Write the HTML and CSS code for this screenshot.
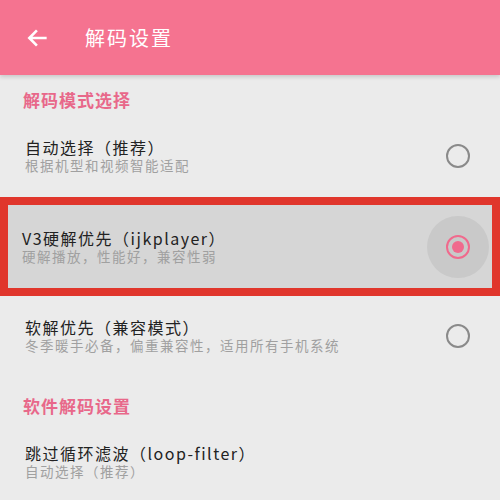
FILE: index.html
```html
<!DOCTYPE html>
<html lang="zh">
<head>
    <meta charset="UTF-8">
    <title>解码设置</title>
    <link rel="stylesheet" href="styles.css">
</head>
<body>
    <div class="toolbar">
        <svg class="back" width="26" height="26" viewBox="0 0 24 24">
            <path d="M20 12H5M11 5l-7 7 7 7" fill="none" stroke="#fff" stroke-width="2.4"/>
        </svg>
        <span class="title">解码设置</span>
    </div>

    <div class="section">解码模式选择</div>

    <div class="item">
        <div class="text">
            <div class="name">自动选择（推荐）</div>
            <div class="desc">根据机型和视频智能适配</div>
        </div>
        <div class="radio-wrap"><span class="radio"></span></div>
    </div>

    <div class="item highlighted">
        <div class="text">
            <div class="name">V3硬解优先（ijkplayer）</div>
            <div class="desc">硬解播放，性能好，兼容性弱</div>
        </div>
        <div class="radio-wrap ripple"><span class="radio checked"></span></div>
    </div>

    <div class="item short">
        <div class="text">
            <div class="name">软解优先（兼容模式）</div>
            <div class="desc">冬季暖手必备，偏重兼容性，适用所有手机系统</div>
        </div>
        <div class="radio-wrap"><span class="radio"></span></div>
    </div>

    <div class="section second">软件解码设置</div>

    <div class="item">
        <div class="text">
            <div class="name">跳过循环滤波（loop-filter）</div>
            <div class="desc">自动选择（推荐）</div>
        </div>
    </div>
</body>
</html>
```

FILE: styles.css
```css
body {
    margin: 0;
    background-color: #ebebeb;
    font-family: "Noto Sans CJK SC", "Liberation Sans", sans-serif;
    overflow: hidden;
}

.toolbar {
    height: 75px;
    background-color: #f57390;
    display: flex;
    align-items: center;
    box-shadow: 0 2px 4px rgba(0, 0, 0, 0.15);
}

.back {
    margin-left: 25px;
}

.title {
    margin-left: 34px;
    color: #fff;
    font-size: 20px;
    letter-spacing: 2px;
}

.section {
    box-sizing: border-box;
    height: 40px;
    padding: 14px 0 0 23px;
    color: #e8688a;
    font-size: 17px;
    line-height: 22px;
    font-weight: bold;
    letter-spacing: 1px;
}

.section.second {
    height: 45px;
    padding-top: 19px;
}

.item {
    height: 82px;
    display: flex;
    align-items: center;
    padding-left: 25px;
    box-sizing: border-box;
}

.item.short {
    height: 80px;
}

.item.highlighted {
    height: 99px;
    border: 8px solid #e0362c;
    background-color: #d6d6d6;
    padding-left: 14px;
}

.text {
    flex: 1;
}

.name {
    font-size: 16px;
    color: #222;
    line-height: 19px;
    letter-spacing: 1.5px;
}

.desc {
    font-size: 13.5px;
    color: #a0a0a0;
    line-height: 17px;
    letter-spacing: 1.5px;
}

.radio-wrap {
    width: 62px;
    height: 62px;
    margin-right: 11px;
    display: flex;
    align-items: center;
    justify-content: center;
    border-radius: 50%;
}

.highlighted .radio-wrap {
    margin-right: 3px;
}

.ripple {
    background-color: #c9c9c9;
}

.radio {
    width: 20px;
    height: 20px;
    border: 2px solid #8a8a8a;
    border-radius: 50%;
    display: flex;
    align-items: center;
    justify-content: center;
}

.radio.checked {
    border-color: #f06a8d;
}

.radio.checked::after {
    content: "";
    width: 12px;
    height: 12px;
    border-radius: 50%;
    background-color: #f06a8d;
}
```
